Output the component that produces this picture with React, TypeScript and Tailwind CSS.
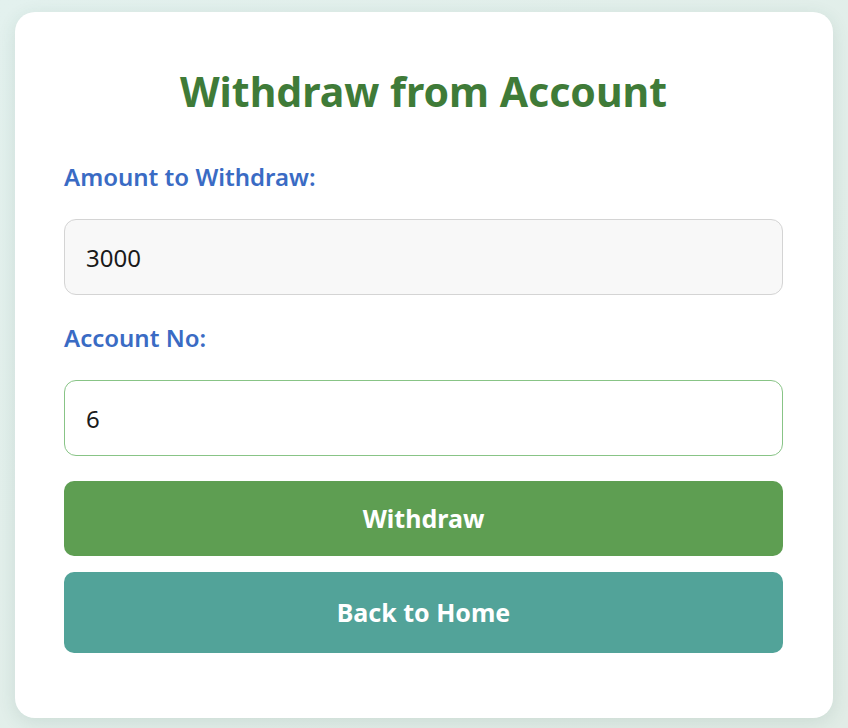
import { useState } from "react";

export default function App() {
  const [amount, setAmount] = useState("3000");
  const [accountNo, setAccountNo] = useState("6");

  return (
    <div className="min-h-screen w-full bg-gradient-to-br from-[#e3f1ee] to-[#e1ece6] pt-[12px] pb-[10px] px-[15px] font-['Noto_Sans',sans-serif]">
      <div className="bg-white rounded-[20px] shadow-[0_4px_18px_rgba(40,90,70,0.12)] pt-[55px] pb-[65px] pl-[49px] pr-[50px] flex flex-col">
        <h1 className="text-center text-[41px] leading-[48px] font-bold text-[#3f7b38]">
          Withdraw from Account
        </h1>

        {/* Amount */}
        <label className="mt-[46px] text-[24px] leading-[32px] font-semibold text-[#3a6bc4]">
          Amount to Withdraw:
        </label>
        <input
          type="text"
          value={amount}
          onChange={(e) => setAmount(e.target.value)}
          className="mt-[26px] h-[76px] w-full px-[21px] bg-[#f8f8f8] border border-[#d4d4d4] rounded-[12px] text-[24px] text-[#1a1a1a] outline-none"
        />

        {/* Account number */}
        <label className="mt-[27px] text-[24px] leading-[32px] font-semibold text-[#3a6bc4]">
          Account No:
        </label>
        <input
          type="text"
          value={accountNo}
          onChange={(e) => setAccountNo(e.target.value)}
          className="mt-[26px] h-[76px] w-full px-[21px] bg-white border border-[#88c486] rounded-[12px] text-[24px] text-[#1a1a1a] outline-none"
        />

        {/* Actions */}
        <button className="mt-[25px] h-[75px] w-full bg-[#5e9e52] text-white text-[25px] font-bold rounded-[10px]">
          Withdraw
        </button>
        <button className="mt-[16px] h-[81px] w-full bg-[#52a399] text-white text-[25px] font-bold rounded-[10px]">
          Back to Home
        </button>
      </div>
    </div>
  );
}
